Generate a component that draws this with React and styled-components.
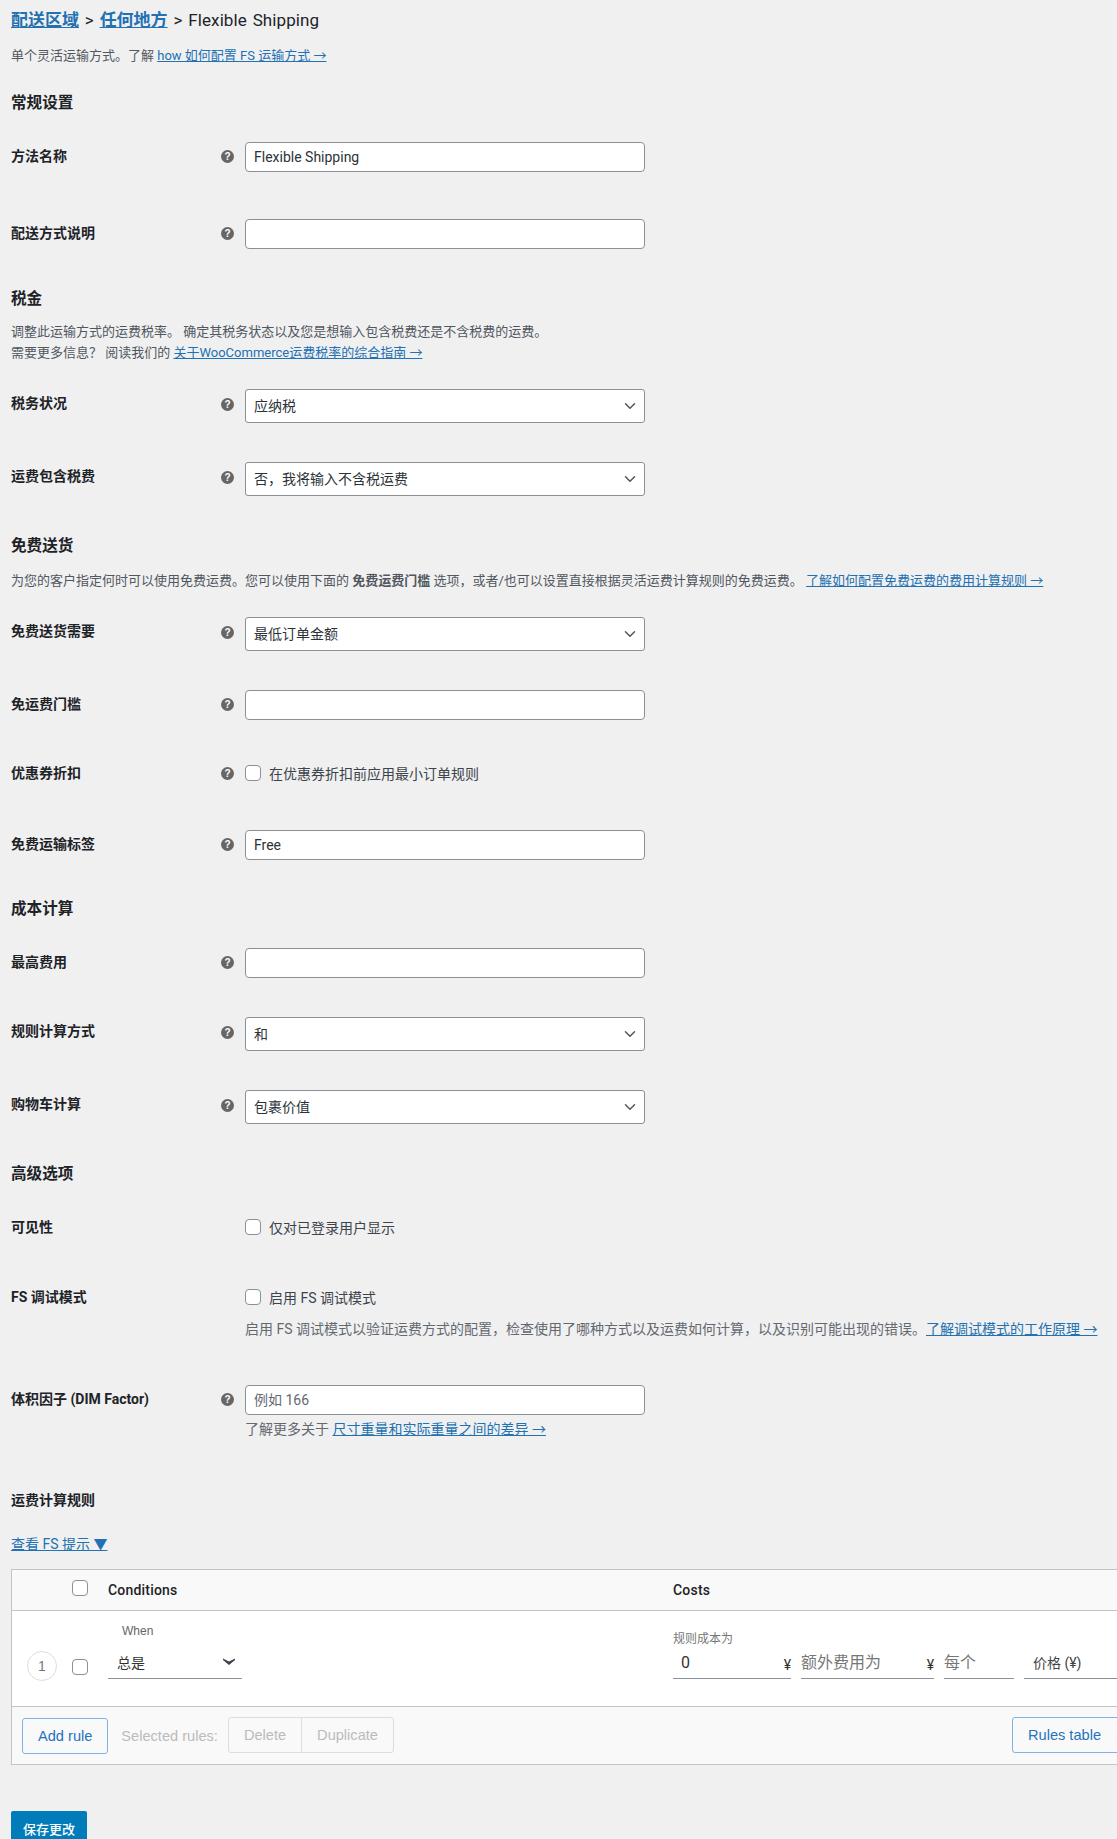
import React from 'react';
import styled, { createGlobalStyle } from 'styled-components';
import { ChevronDown, ChevronUp } from 'lucide-react';

const latin = '"Roboto", "Noto Sans CJK SC", sans-serif';
const arial = '"Liberation Sans", "Noto Sans CJK SC", sans-serif';

const GlobalStyle = createGlobalStyle`
  html, body {
    margin: 0;
    padding: 0;
    background: #f0f0f1;
  }
  #root {
    width: 1117px;
    height: 1839px;
    overflow: hidden;
  }
`;

const Page = styled.form`
  padding: 8px 0 0 11px;
  font-family: ${latin};
  font-size: 13px;
  color: #3c434a;
`;

const Link = styled.a`
  color: #2271b1;
  text-decoration: underline;
`;

const Breadcrumb = styled.h2`
  margin: 0;
  font-size: 17px;
  line-height: 24px;
  font-weight: 400;
  word-spacing: 1.5px;
  letter-spacing: 0.1px;
  color: #1d2327;
  ${Link} {
    font-weight: 700;
    letter-spacing: 0;
  }
`;

const Text = styled.p`
  margin: ${(p) => p.$top || 0}px 0 0;
  font-size: ${(p) => p.$size || 13}px;
  line-height: 21px;
  color: #50575e;
`;

const SectionTitle = styled.h3`
  margin: ${(p) => p.$top}px 0 0;
  font-size: 15.6px;
  line-height: 20px;
  font-weight: 700;
  color: #1d2327;
`;

const Row = styled.div`
  display: grid;
  grid-template-columns: 210px 24px 1fr;
  margin-top: ${(p) => p.$top}px;
`;

const Label = styled.label`
  font-size: 14px;
  line-height: 28px;
  font-weight: 700;
  color: #1d2327;
`;

const Help = styled.span`
  display: flex;
  align-items: center;
  justify-content: center;
  width: 13px;
  height: 13px;
  margin-top: ${(p) => p.$top || 8}px;
  border-radius: 50%;
  background: #666;
  color: #fff;
  font: 700 10px/13px ${arial};
`;

const Field = styled.div`
  position: relative;
  width: 400px;
`;

const TextInput = styled.input`
  display: block;
  box-sizing: border-box;
  width: 400px;
  height: 30px;
  padding: 0 8px;
  border: 1px solid #8c8f94;
  border-radius: 4px;
  background: #fff;
  font-family: ${latin};
  font-size: 14px;
  color: #2c3338;
  &::placeholder {
    color: #646970;
    opacity: 1;
  }
`;

const Select = styled.select`
  display: block;
  box-sizing: border-box;
  width: 400px;
  height: 34px;
  padding: 0 24px 0 8px;
  border: 1px solid #8c8f94;
  border-radius: 3px;
  background: #fff;
  appearance: none;
  font-family: ${latin};
  font-size: 14px;
  color: #2c3338;
`;

const SelectArrow = styled(ChevronDown)`
  position: absolute;
  top: 8px;
  right: 6px;
  width: 18px;
  height: 18px;
  color: #50575e;
  pointer-events: none;
`;

const CheckLine = styled.label`
  display: flex;
  align-items: center;
  gap: 8px;
  height: 28px;
  font-size: 14px;
  color: #3c434a;
  width: 800px;
`;

const Check = styled.input.attrs({ type: 'checkbox' })`
  appearance: none;
  box-sizing: border-box;
  flex: none;
  width: 16px;
  height: 16px;
  margin: 0;
  border: 1px solid #8c8f94;
  border-radius: 4px;
  background: #fff;
`;

const FieldNote = styled.p`
  margin: ${(p) => p.$top}px 0 0;
  font-size: 14px;
  line-height: 21px;
  color: #646970;
  white-space: nowrap;
`;

const Table = styled.div`
  box-sizing: border-box;
  width: 1144px;
  margin-top: 14px;
  border: 1px solid #c3c4c7;
  background: #f9f9f9;
`;

const TableHead = styled.div`
  display: grid;
  grid-template-columns: 60px 36px 565px 1fr;
  align-items: center;
  height: 40px;
  border-bottom: 1px solid #c3c4c7;
`;

const HeadTitle = styled.div`
  font-size: 14px;
  font-weight: 500;
  letter-spacing: 0.2px;
  color: #1d2327;
`;

const HeadCheck = styled(Check)`
  margin-top: -4px;
`;

const TableBody = styled.div`
  display: grid;
  grid-template-columns: 60px 36px 565px 1fr;
  height: 95px;
  border-bottom: 1px solid #c3c4c7;
  background: #fff;
`;

const Cell = styled.div`
  display: flex;
  flex-direction: column;
  justify-content: flex-end;
  padding-bottom: ${(p) => p.$bottom}px;
`;

const RuleIndex = styled.span`
  display: flex;
  align-items: center;
  justify-content: center;
  box-sizing: border-box;
  width: 30px;
  height: 30px;
  margin-left: 15px;
  border: 1px solid #ddd;
  border-radius: 50%;
  font: 14px ${arial};
  color: #777;
`;

const WhenLabel = styled.span`
  margin: 0 0 12px 14px;
  font: 12px/16px ${arial};
  color: #666;
`;

const Underlined = styled.div`
  display: flex;
  align-items: center;
  box-sizing: border-box;
  width: ${(p) => p.$width}px;
  height: 28px;
  border-bottom: 1px solid #8c8f94;
`;

const WhenValue = styled(Underlined)`
  justify-content: space-between;
  padding: 0 7px 6px 9px;
  font-size: 14px;
  color: #333;
`;

const Costs = styled.div`
  display: flex;
  align-items: flex-end;
  gap: 10px;
`;

const CostColumn = styled.div`
  display: flex;
  flex-direction: column;
`;

const CostLabel = styled.span`
  margin-bottom: 4px;
  font-size: 12px;
  line-height: 16px;
  color: #777;
`;

const CostInput = styled.input`
  flex: 1;
  min-width: 0;
  box-sizing: border-box;
  height: 27px;
  padding: 0 0 4px ${(p) => p.$left || 0}px;
  border: 0;
  outline: 0;
  background: transparent;
  font-family: ${latin};
  font-size: 16px;
  color: #333;
  &::placeholder {
    color: #777;
    opacity: 1;
  }
`;

const Currency = styled.span`
  font-size: 14px;
  color: #333;
`;

const CostUnit = styled.span`
  padding: 0 0 6px 9px;
  font-size: 14px;
  color: #444;
`;

const TableFoot = styled.div`
  display: flex;
  align-items: center;
  height: 57px;
  padding: 0 10px;
  font-family: ${arial};
  font-size: 14.6px;
`;

const OutlineButton = styled.button`
  display: flex;
  align-items: center;
  gap: 13px;
  box-sizing: border-box;
  height: 36px;
  margin-top: ${(p) => (p.$raise ? -2 : 0)}px;
  margin-left: ${(p) => (p.$raise ? 'auto' : 0)};
  padding: 0 15px;
  border: 1px solid #7fb3e6;
  border-radius: 3px;
  background: transparent;
  color: #1e73be;
  font: 14.6px ${arial};
`;

const SelectedText = styled.span`
  margin: 0 10px 0 13px;
  color: #bbb;
`;

const ButtonGroup = styled.div`
  display: flex;
  box-sizing: border-box;
  height: 36px;
  margin-top: -2px;
  border: 1px solid #ddd;
  border-radius: 3px;
`;

const GroupButton = styled.button`
  padding: 0 15px;
  border: 0;
  border-left: ${(p) => (p.$divided ? '1px solid #ddd' : '0')};
  background: transparent;
  color: #bbb;
  font: 14.6px ${arial};
`;

const SaveButton = styled.button`
  display: block;
  box-sizing: border-box;
  height: 36px;
  margin-top: 46px;
  padding: 0 12px 2px;
  border: 0;
  border-radius: 2px 2px 0 0;
  background: #007cba;
  color: #fff;
  font-family: ${latin};
  font-size: 13px;
  font-weight: 500;
`;

const HelpTip = ({ top }) => <Help $top={top}>?</Help>;

const InputRow = ({ top, label, value, placeholder }) => (
  <Row $top={top}>
    <Label>{label}</Label>
    <HelpTip />
    <TextInput defaultValue={value} placeholder={placeholder} />
  </Row>
);

const SelectRow = ({ top, label, value }) => (
  <Row $top={top}>
    <Label>{label}</Label>
    <HelpTip top={9} />
    <Field>
      <Select defaultValue={value}>
        <option>{value}</option>
      </Select>
      <SelectArrow strokeWidth={2} />
    </Field>
  </Row>
);

const CheckRow = ({ top, label, text, noHelp }) => (
  <Row $top={top}>
    <Label>{label}</Label>
    {noHelp ? <span /> : <HelpTip />}
    <CheckLine>
      <Check />
      {text}
    </CheckLine>
  </Row>
);

export default function App() {
  return (
    <>
      <GlobalStyle />
      <Page onSubmit={(e) => e.preventDefault()}>
        <Breadcrumb>
          <Link href="#">配送区域</Link> &gt; <Link href="#">任何地方</Link> &gt; Flexible Shipping
        </Breadcrumb>
        <Text $top={13}>
          单个灵活运输方式。了解 <Link href="#">how 如何配置 FS 运输方式 →</Link>
        </Text>

        <SectionTitle $top={27}>常规设置</SectionTitle>
        <InputRow top={29} label="方法名称" value="Flexible Shipping" />
        <InputRow top={47} label="配送方式说明" />

        <SectionTitle $top={40}>税金</SectionTitle>
        <Text $top={12}>
          调整此运输方式的运费税率。 确定其税务状态以及您是想输入包含税费还是不含税费的运费。
          <br />
          需要更多信息？ 阅读我们的 <Link href="#">关于WooCommerce运费税率的综合指南 →</Link>
        </Text>
        <SelectRow top={26} label="税务状况" value="应纳税" />
        <SelectRow top={39} label="运费包含税费" value="否，我将输入不含税运费" />

        <SectionTitle $top={40}>免费送货</SectionTitle>
        <Text $top={14}>
          为您的客户指定何时可以使用免费运费。您可以使用下面的 <strong>免费运费门槛</strong> 选项，或者/也可以设置直接根据灵活运费计算规则的免费运费。{' '}
          <Link href="#">了解如何配置免费运费的费用计算规则 →</Link>
        </Text>
        <SelectRow top={26} label="免费送货需要" value="最低订单金额" />
        <InputRow top={39} label="免运费门槛" />
        <CheckRow top={39} label="优惠券折扣" text="在优惠券折扣前应用最小订单规则" />
        <InputRow top={43} label="免费运输标签" value="Free" />

        <SectionTitle $top={39}>成本计算</SectionTitle>
        <InputRow top={29} label="最高费用" />
        <SelectRow top={39} label="规则计算方式" value="和" />
        <SelectRow top={39} label="购物车计算" value="包裹价值" />

        <SectionTitle $top={40}>高级选项</SectionTitle>
        <CheckRow top={29} label="可见性" text="仅对已登录用户显示" noHelp />
        <Row $top={42}>
          <Label>FS 调试模式</Label>
          <span />
          <div>
            <CheckLine>
              <Check />
              启用 FS 调试模式
            </CheckLine>
            <FieldNote $top={8}>
              启用 FS 调试模式以验证运费方式的配置，检查使用了哪种方式以及运费如何计算，以及识别可能出现的错误。
              <Link href="#">了解调试模式的工作原理 →</Link>
            </FieldNote>
          </div>
        </Row>
        <Row $top={45}>
          <Label>体积因子 (DIM Factor)</Label>
          <HelpTip />
          <div>
            <TextInput placeholder="例如 166" />
            <FieldNote $top={4}>
              了解更多关于 <Link href="#">尺寸重量和实际重量之间的差异 →</Link>
            </FieldNote>
          </div>
        </Row>

        <Row $top={46}>
          <Label>运费计算规则</Label>
        </Row>
        <Text $top={20} $size={14}>
          <Link href="#">查看 FS 提示 ▼</Link>
        </Text>

        <Table>
          <TableHead>
            <span />
            <HeadCheck />
            <HeadTitle>Conditions</HeadTitle>
            <HeadTitle>Costs</HeadTitle>
          </TableHead>
          <TableBody>
            <Cell $bottom={25}>
              <RuleIndex>1</RuleIndex>
            </Cell>
            <Cell $bottom={31}>
              <Check />
            </Cell>
            <Cell $bottom={27}>
              <WhenLabel>When</WhenLabel>
              <WhenValue $width={134}>
                总是
                <svg width="12" height="7" viewBox="0 0 12 7">
                  <path d="M0 0.5 L6 3.5 L12 0.5 L12 2 L6 7 L0 2 Z" fill="#3c434a" />
                </svg>
              </WhenValue>
            </Cell>
            <Cell $bottom={27}>
              <Costs>
                <CostColumn>
                  <CostLabel>规则成本为</CostLabel>
                  <Underlined $width={118}>
                    <CostInput defaultValue="0" $left={8} />
                    <Currency>¥</Currency>
                  </Underlined>
                </CostColumn>
                <Underlined $width={133}>
                  <CostInput placeholder="额外费用为" />
                  <Currency>¥</Currency>
                </Underlined>
                <Underlined $width={70}>
                  <CostInput placeholder="每个" />
                </Underlined>
                <Underlined $width={110}>
                  <CostUnit>价格 (¥)</CostUnit>
                </Underlined>
              </Costs>
            </Cell>
          </TableBody>
          <TableFoot>
            <OutlineButton type="button">Add rule</OutlineButton>
            <SelectedText>Selected rules:</SelectedText>
            <ButtonGroup>
              <GroupButton type="button">Delete</GroupButton>
              <GroupButton type="button" $divided>Duplicate</GroupButton>
            </ButtonGroup>
            <OutlineButton type="button" $raise>
              Rules table
              <ChevronUp size={14} />
            </OutlineButton>
          </TableFoot>
        </Table>

        <SaveButton type="submit">保存更改</SaveButton>
      </Page>
    </>
  );
}
